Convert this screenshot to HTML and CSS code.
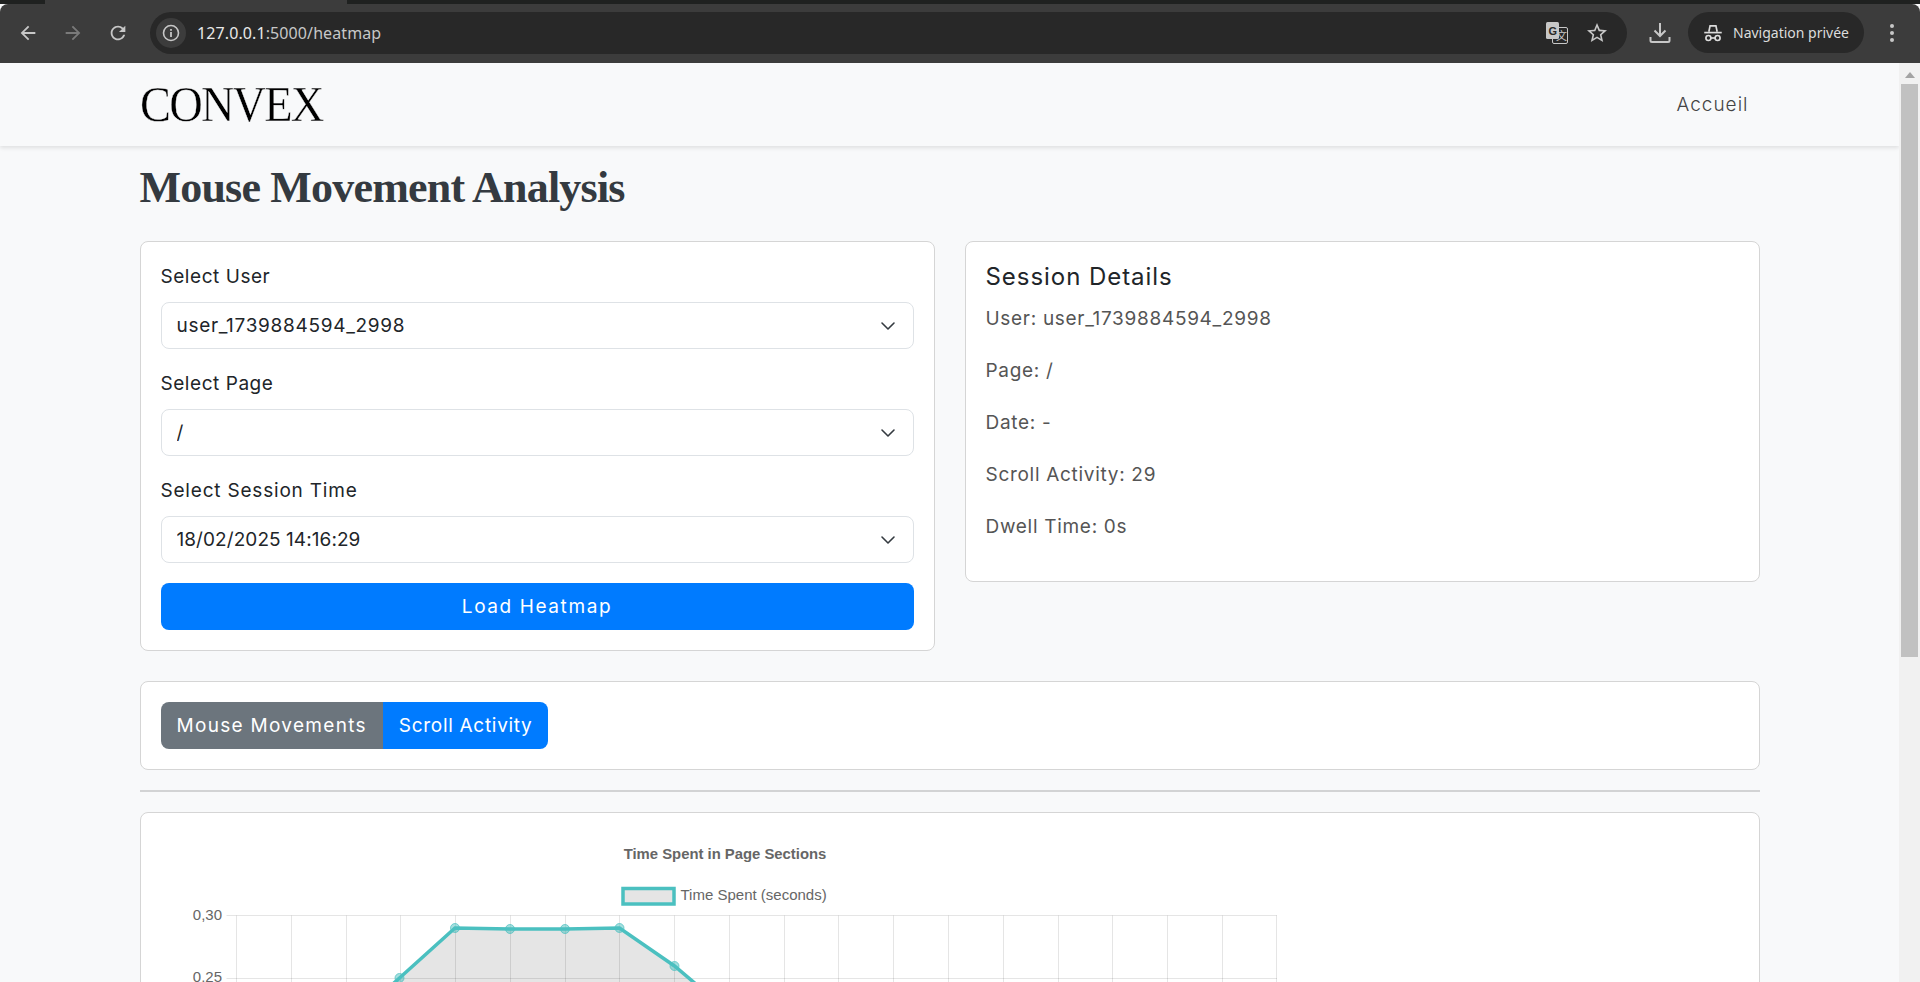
FILE: index.html

```html
<!DOCTYPE html>
<html lang="fr">
<head>
<meta charset="UTF-8">
<title>Mouse Movement Analysis</title>
<link rel="stylesheet" href="styles.css">
</head>
<body>

<!-- browser bar -->
<div class="tabstrip"><div class="active-tab"></div></div>
<div class="toolbar">
  <div class="nav-icon">
    <svg width="22" height="22" viewBox="0 0 24 24"><path class="ic" d="M20 11H7.83l5.59-5.59L12 4l-8 8 8 8 1.41-1.41L7.83 13H20v-2z"/></svg>
  </div>
  <div class="nav-icon off">
    <svg width="22" height="22" viewBox="0 0 24 24"><path class="ic" d="M4 11h12.17l-5.59-5.59L12 4l8 8-8 8-1.41-1.41L16.17 13H4v-2z"/></svg>
  </div>
  <div class="nav-icon">
    <svg width="22" height="22" viewBox="0 0 24 24"><path class="ic" d="M17.65 6.35A7.958 7.958 0 0 0 12 4c-4.42 0-7.99 3.58-7.99 8s3.57 8 7.99 8c3.73 0 6.84-2.55 7.73-6h-2.08A5.99 5.99 0 0 1 12 18c-3.31 0-6-2.69-6-6s2.69-6 6-6c1.66 0 3.14.69 4.22 1.78L13 11h7V4l-2.35 2.35z"/></svg>
  </div>
  <div class="omnibox">
    <div class="info-bubble">
      <svg width="18" height="18" viewBox="0 0 18 18"><circle cx="9" cy="9" r="7.5" fill="none" stroke="#c7c7c7" stroke-width="1.6"/><rect x="8.1" y="8" width="1.8" height="5" fill="#c7c7c7"/><rect x="8.1" y="5" width="1.8" height="1.8" fill="#c7c7c7"/></svg>
    </div>
    <span class="url"><b>127.0.0.1</b>:5000/heatmap</span>
    <div class="omni-icons">
      <svg width="22" height="22" viewBox="0 0 22 22">
        <rect x="6.5" y="5.5" width="15" height="16" rx="1.5" fill="#282828" stroke="#c7c7c7"/>
        <rect x="0" y="0" width="13" height="17" rx="1.5" fill="#c7c7c7"/>
        <text x="2.5" y="12.5" class="tr-g">G</text>
        <text x="10" y="17.5" class="tr-w">文</text>
      </svg>
      <svg width="24" height="24" viewBox="0 0 24 24"><path class="ic" d="M22 9.24l-7.19-.62L12 2 9.19 8.63 2 9.24l5.46 4.73L5.82 21 12 17.27 18.18 21l-1.63-7.03L22 9.24zM12 15.4l-3.76 2.27 1-4.28-3.32-2.88 4.38-.38L12 6.1l1.71 4.04 4.38.38-3.32 2.88 1 4.28L12 15.4z"/></svg>
    </div>
  </div>
  <div class="download">
    <svg width="24" height="24" viewBox="0 0 24 24" fill="none" stroke="#c7c7c7" stroke-width="2"><path d="M12 2v13M6.5 9.5 12 15l5.500-5.500"/><path d="M2.500 16v3.500a1.500 1.500 0 0 0 1.500 1.500h16a1.500 1.500 0 0 0 1.500-1.500V16"/></svg>
  </div>
  <div class="private-pill">
    <svg width="20" height="20" viewBox="0 0 24 24" fill="none" stroke="#dcdcdc" stroke-width="2"><path d="M7 10.500 8.500 3.500h7l1.500 7"/><path d="M1.500 11.500h21"/><circle cx="6.500" cy="18" r="3"/><circle cx="17.500" cy="18" r="3"/><path d="M9.500 18h5"/></svg>
    <span>Navigation privée</span>
  </div>
  <div class="menu-dots"><i></i><i></i><i></i></div>
</div>

<div class="viewport">
  <div class="main">
    <nav class="navbar">
      <div class="navbar-inner">
        <a class="logo">CONVEX</a>
        <a class="nav-link">Accueil</a>
      </div>
    </nav>

    <div class="container">
      <h1>Mouse Movement Analysis</h1>

      <div class="row">
        <div class="card">
          <div class="form-group">
            <label>Select User</label>
            <select><option>user_1739884594_2998</option></select>
          </div>
          <div class="form-group">
            <label>Select Page</label>
            <select><option>/</option></select>
          </div>
          <div class="form-group">
            <label class="label-long">Select Session Time</label>
            <select class="select-date"><option>18/02/2025 14:16:29</option></select>
          </div>
          <button class="btn btn-primary btn-block">Load Heatmap</button>
        </div>

        <div class="card details">
          <h4>Session Details</h4>
          <p>User: user_1739884594_2998</p>
          <p>Page: /</p>
          <p>Date: -</p>
          <p>Scroll Activity: 29</p>
          <p>Dwell Time: 0s</p>
        </div>
      </div>

      <div class="card">
        <div class="btn-group">
          <button class="btn btn-secondary">Mouse Movements</button>
          <button class="btn btn-primary">Scroll Activity</button>
        </div>
      </div>

      <hr>

      <div class="card chart-card">
        <svg class="chart" width="1200" height="420" viewBox="0 0 1200 420">
          <path class="grid" d="M75.500 82.500V420M130.500 82.500V420M185.500 82.500V420M239.500 82.500V420M294.500 82.500V420M349.500 82.500V420M404.500 82.500V420M458.500 82.500V420M513.500 82.500V420M568.500 82.500V420M623.500 82.500V420M677.500 82.500V420M732.500 82.500V420M787.500 82.500V420M842.500 82.500V420M897.500 82.500V420M951.500 82.500V420M1006.500 82.500V420M1061.500 82.500V420M1115.500 82.500V420"/>
          <path class="grid" d="M65.500 82.500H1116M65.500 145.500H1116M65.500 208.500H1116"/>
          <polygon class="area" points="75,320 130,255 184,194 238.500,145 294,95 349,96 404,96 458.500,95 513.500,133 568,179 623,232 678,290 733,340 733,420 75,420"/>
          <polyline class="line" points="75,320 130,255 184,194 238.500,145 294,95 349,96 404,96 458.500,95 513.500,133 568,179 623,232 678,290 733,340"/>
          <circle class="point" cx="238.500" cy="145" r="4.500"/>
          <circle class="point" cx="294" cy="95" r="4.500"/>
          <circle class="point" cx="349" cy="96" r="4.500"/>
          <circle class="point" cx="404" cy="96" r="4.500"/>
          <circle class="point" cx="458.500" cy="95" r="4.500"/>
          <circle class="point" cx="513.500" cy="133" r="4.500"/>
          <text class="chart-title" x="564" y="26" text-anchor="middle">Time Spent in Page Sections</text>
          <rect class="legend-box" x="462" y="55.500" width="51" height="15.500"/>
          <text class="chart-text" x="519.500" y="67">Time Spent (seconds)</text>
          <text class="chart-text" x="61" y="86.500" text-anchor="end">0,30</text>
          <text class="chart-text" x="61" y="149" text-anchor="end">0,25</text>
        </svg>
      </div>
    </div>
  </div>

  <div class="scrollbar">
    <div class="scroll-arrow"></div>
    <div class="scroll-thumb"></div>
  </div>
</div>

</body>
</html>
```

FILE: styles.css

```css
body {
  margin: 0;
  height: 982px;
  overflow: hidden;
  display: flex;
  flex-direction: column;
  font-family: Inter, "Noto Sans", sans-serif;
  font-size: 19px;
  letter-spacing: 0.7px;
  background: #f8f9fa;
  color: #212529;
}

/* browser bar */
.tabstrip {
  height: 4px;
  background: #1f2120;
  flex-shrink: 0;
}
.active-tab {
  margin-left: 45px;
  width: 302px;
  height: 4px;
  background: #3c3c3c;
}
.toolbar {
  height: 59px;
  flex-shrink: 0;
  background: #3c3c3c;
  border-radius: 8px 8px 0 0;
  display: flex;
  align-items: flex-start;
  padding: 8px 0 0 5px;
  box-sizing: border-box;
  font-family: "Noto Sans", sans-serif;
  letter-spacing: 0;
}
.ic {
  fill: #c7c7c7;
}
.nav-icon {
  width: 45px;
  height: 42px;
  display: flex;
  align-items: center;
  justify-content: center;
}
.nav-icon.off {
  opacity: 0.45;
}
.omnibox {
  flex: 1;
  height: 42px;
  margin-left: 10px;
  background: #282828;
  border-radius: 21px;
  display: flex;
  align-items: center;
  padding: 0 12px 0 6px;
}
.info-bubble {
  width: 30px;
  height: 30px;
  border-radius: 50%;
  background: #3c3c3c;
  display: flex;
  align-items: center;
  justify-content: center;
}
.url {
  margin-left: 11px;
  font-size: 16px;
  letter-spacing: 0.1px;
  color: #c7c7c7;
  flex: 1;
}
.url b {
  font-weight: 400;
  color: #e8e8e8;
}
.omni-icons {
  display: flex;
  align-items: center;
  gap: 17px;
  padding-right: 6px;
}
.tr-g {
  font: bold 11px "Liberation Sans", sans-serif;
  fill: #282828;
}
.tr-w {
  font: 11px "Noto Sans CJK SC", sans-serif;
  fill: #c7c7c7;
}
.download {
  width: 38px;
  height: 42px;
  margin-left: 14px;
  display: flex;
  align-items: center;
  justify-content: center;
}
.private-pill {
  width: 176px;
  height: 41px;
  margin-left: 9px;
  box-sizing: border-box;
  padding-left: 15px;
  background: #282828;
  border-radius: 21px;
  display: flex;
  align-items: center;
  gap: 10px;
  color: #dcdcdc;
  font-size: 14px;
}
.menu-dots {
  width: 56px;
  height: 42px;
  display: flex;
  flex-direction: column;
  align-items: center;
  justify-content: center;
  gap: 3px;
}
.menu-dots i {
  width: 4px;
  height: 4px;
  border-radius: 50%;
  background: #c7c7c7;
}

/* page */
.viewport {
  flex: 1;
  display: flex;
  min-height: 0;
}
.main {
  flex: 1;
  min-width: 0;
  overflow: hidden;
}
.scrollbar {
  width: 21px;
  flex-shrink: 0;
  background: #f1f1f1;
  padding: 0 2px 0 2px;
  box-sizing: border-box;
}
.scroll-arrow {
  width: 0;
  height: 0;
  margin: 9px auto 6px;
  border-left: 5px solid transparent;
  border-right: 5px solid transparent;
  border-bottom: 6px solid #a3a3a3;
}
.scroll-thumb {
  height: 573px;
  background: #c1c1c1;
}

.navbar {
  height: 83px;
  background: #f8f9fa;
  box-shadow: 0 2px 4px rgba(0,0,0,0.1);
  position: relative;
}
.navbar-inner {
  max-width: 1620px;
  height: 100%;
  margin: auto;
  display: flex;
  align-items: center;
  justify-content: space-between;
}
.logo {
  font-family: "Liberation Serif", serif;
  font-size: 50px;
  letter-spacing: -2px;
  color: #000;
  margin-top: -1px;
  transform: scaleX(0.93);
  transform-origin: left;
  -webkit-text-stroke: 0.4px #f8f9fa;
}
.nav-link {
  color: #444;
  font-weight: 300;
  letter-spacing: 1px;
  margin-right: 11px;
}

.container {
  max-width: 1620px;
  margin: auto;
}
h1 {
  margin: 0;
  height: 95px;
  line-height: 84px;
  font-family: "Liberation Serif", serif;
  font-size: 44px;
  font-weight: 700;
  letter-spacing: -0.8px;
  color: #343a40;
}
.row {
  display: flex;
  align-items: flex-start;
  gap: 30px;
  margin-bottom: 30px;
}
.card {
  flex: 1;
  background: white;
  border: 1px solid #d5d5d5;
  border-radius: 8px;
  padding: 20px;
}

.form-group {
  margin-bottom: 20px;
}
label {
  display: block;
  height: 27px;
  line-height: 30px;
  margin-bottom: 13px;
  letter-spacing: 0.55px;
  color: #212529;
}
.label-long {
  letter-spacing: 0.8px;
}
select {
  display: block;
  width: 100%;
  height: 47px;
  padding: 0 15px;
  font: inherit;
  letter-spacing: inherit;
  color: #212529;
  background: white url("data:image/svg+xml,%3Csvg xmlns='http://www.w3.org/2000/svg' viewBox='0 0 16 16'%3E%3Cpath fill='none' stroke='%23343a40' stroke-linecap='round' stroke-linejoin='round' stroke-width='1.6' d='M2 5l6 6 6-6'/%3E%3C/svg%3E") no-repeat right 17px center / 16px 16px;
  border: 1px solid #dee2e6;
  border-radius: 8px;
  appearance: none;
}
.select-date {
  letter-spacing: 0.07px;
}
.btn {
  height: 47px;
  padding: 0 16px;
  font: inherit;
  letter-spacing: inherit;
  color: white;
  border: none;
  border-radius: 8px;
}
.btn-block {
  display: block;
  width: 100%;
  letter-spacing: 1.6px;
}
.btn-primary {
  background: #007bff;
}
.btn-secondary {
  background: #6c757d;
  letter-spacing: 1.3px;
}
.btn-group {
  display: flex;
}
.btn-group .btn:first-child {
  border-radius: 8px 0 0 8px;
}
.btn-group .btn:last-child {
  border-radius: 0 8px 8px 0;
}

.details {
  padding-bottom: 16px;
}
.details h4 {
  margin: 0 0 14px;
  font-size: 24px;
  font-weight: 400;
  letter-spacing: 0.95px;
  line-height: 29px;
}
.details p {
  margin: 0 0 25px;
  line-height: 27px;
  color: #555;
}

hr {
  margin: 20px 0;
  border: none;
  border-top: 2px solid #d2d3d4;
}

/* chart */
.chart {
  display: block;
}
.grid {
  fill: none;
  stroke: rgba(0,0,0,0.1);
  stroke-width: 1;
}
.area {
  fill: rgba(0,0,0,0.1);
}
.line {
  fill: none;
  stroke: #4bc0c0;
  stroke-width: 3.5;
}
.point {
  fill: rgba(75,192,192,0.5);
  stroke: rgba(75,192,192,0.7);
  stroke-width: 1;
}
.chart-title {
  font: bold 14.850px "Liberation Sans", sans-serif;
  letter-spacing: 0;
  fill: #666;
}
.chart-text {
  font: 15px "Liberation Sans", sans-serif;
  letter-spacing: 0;
  fill: #666;
}
.legend-box {
  fill: #e5e5e5;
  stroke: #4bc0c0;
  stroke-width: 3.5;
}
```
